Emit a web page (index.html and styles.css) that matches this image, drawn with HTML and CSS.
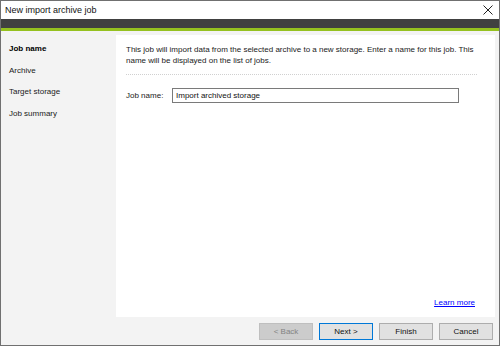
FILE: index.html
```html
<!DOCTYPE html>
<html>
<head>
    <link rel="stylesheet" href="styles.css">
</head>
<body>
    <div class="window">
        <div class="titlebar">
            <span class="title">New import archive job</span>
            <svg class="close" width="10" height="10" viewBox="0 0 10 10">
                <path d="M0.5 0.5 L9.5 9.5 M9.5 0.5 L0.5 9.5" stroke="#222" stroke-width="1" fill="none"/>
            </svg>
        </div>
        <div class="banner"></div>

        <div class="main">
            <ul class="steps">
                <li class="active">Job name</li>
                <li>Archive</li>
                <li>Target storage</li>
                <li>Job summary</li>
            </ul>

            <div class="panel">
                <p class="intro">This job will import data from the selected archive to a new storage. Enter a name for this job. This name will be displayed on the list of jobs.</p>
                <div class="separator"></div>
                <div class="field">
                    <label for="jobname">Job name:</label>
                    <input id="jobname" type="text" value="Import archived storage">
                </div>
                <div class="panel-footer">
                    <a href="#" class="learn-more">Learn more</a>
                </div>
            </div>
        </div>

        <div class="buttons">
            <button disabled>&lt; Back</button>
            <button class="default">Next &gt;</button>
            <button>Finish</button>
            <button>Cancel</button>
        </div>
    </div>
</body>
</html>
```

FILE: styles.css
```css
body {
    margin: 0;
    font-family: "Liberation Sans", Arial, sans-serif;
    font-size: 8px;
    color: #1a1a1a;
}

.window {
    width: 500px;
    height: 346px;
    box-sizing: border-box;
    border: 1px solid #707070;
    display: flex;
    flex-direction: column;
    background-color: #f3f3f3;
}

.titlebar {
    height: 18px;
    background-color: #fff;
    display: flex;
    align-items: center;
    justify-content: space-between;
    padding: 0 6px 0 4px;
}

.title {
    font-size: 9px;
    color: #111;
}

.close {
    display: block;
}

.banner {
    height: 9px;
    background-color: #404040;
    border-bottom: 3px solid #95c11f;
}

.main {
    flex: 1;
    display: flex;
    min-height: 0;
}

.steps {
    width: 115px;
    margin: 0;
    padding: 12px 0 0 8px;
    box-sizing: border-box;
    list-style: none;
}

.steps li {
    line-height: 12px;
    margin-bottom: 9.5px;
}

.steps li.active {
    font-weight: bold;
    color: #000;
}

.panel {
    flex: 1;
    margin: 4px 4px 0 0;
    padding: 9px 18px 10px 10px;
    background-color: #fff;
    display: flex;
    flex-direction: column;
}

.intro {
    margin: 0;
    line-height: 11px;
}

.separator {
    border-top: 1px dotted #d0d0d0;
    margin: 8px 0 13px;
}

.field {
    display: flex;
    align-items: center;
}

.field label {
    width: 46px;
}

.field input {
    width: 287px;
    height: 15px;
    box-sizing: border-box;
    margin: 0;
    padding: 0 3px;
    border: 1px solid #7a7a7a;
    font-family: inherit;
    font-size: 8px;
    color: #111;
}

.panel-footer {
    margin-top: auto;
    display: flex;
    justify-content: flex-end;
    padding-right: 2px;
}

.learn-more {
    color: #0000ff;
}

.buttons {
    height: 28px;
    display: flex;
    justify-content: flex-end;
    align-items: center;
    gap: 6px;
    padding-right: 6px;
}

.buttons button {
    width: 54px;
    height: 17px;
    margin: 0;
    padding: 0;
    border: 1px solid #adadad;
    background-color: #e1e1e1;
    font-family: inherit;
    font-size: 8px;
    color: #111;
}

.buttons button.default {
    border-color: #0078d7;
}

.buttons button:disabled {
    background-color: #cccccc;
    border-color: #bfbfbf;
    color: #838383;
}
```
